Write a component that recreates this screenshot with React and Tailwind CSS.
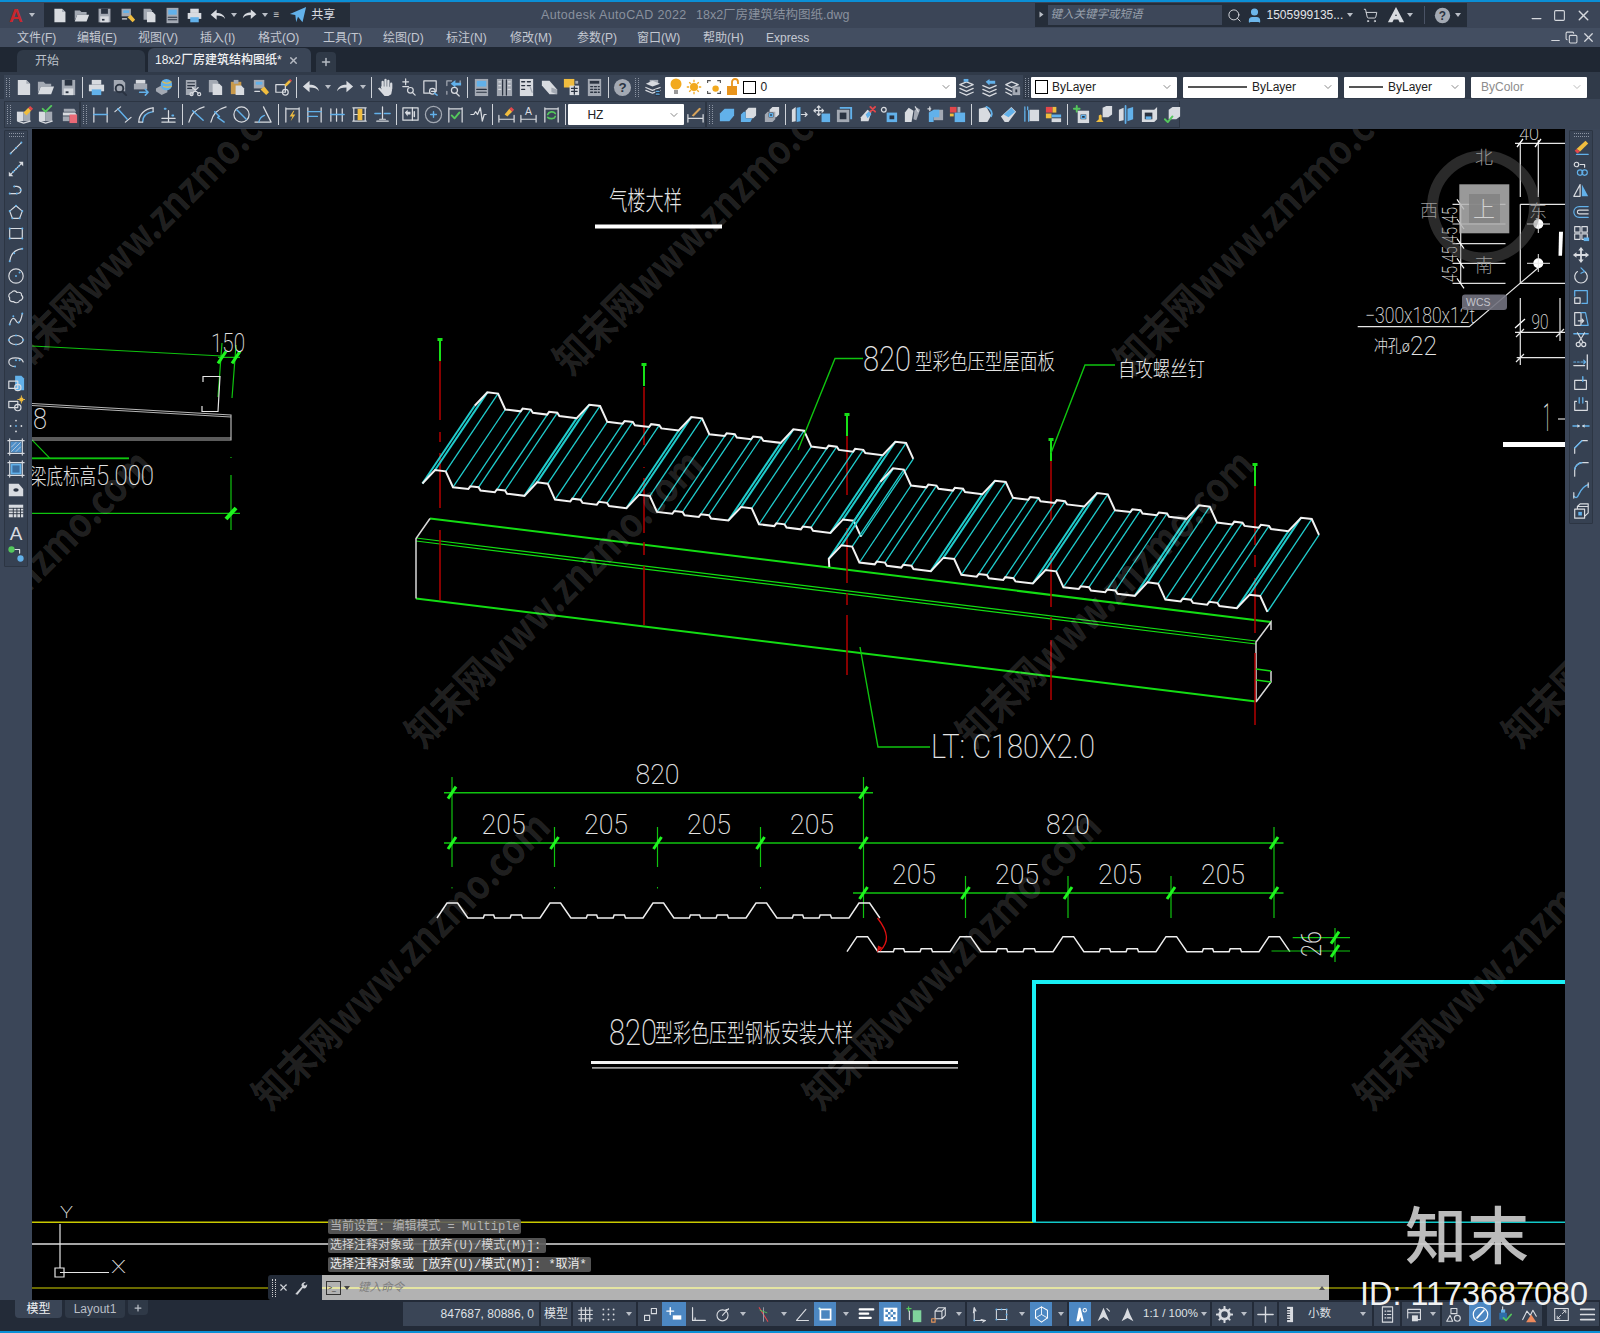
import React from 'react';
import { ChevronDown, Search, Plus, X, Minus, Square, Copy, ShoppingCart, User } from 'lucide-react';

const L = '#d8dbe0', M = '#a3a9b3', B = '#62b1ea', Y = '#f0bd3f', R = '#e2474b', N = '#54c75c', K = '#2a3341';
const ln = (d, c = L, w = 1.3) => <path d={d} stroke={c} strokeWidth={w} />;
const fl = (d, c = L) => <path d={d} fill={c} />;
const dot = (x, y, c = B, r = 1.1) => <circle cx={x} cy={y} r={r} fill={c} />;
const ring = (x, y, r, c = L, w = 1.3) => <circle cx={x} cy={y} r={r} stroke={c} strokeWidth={w} />;

const icons = {
  new: <>{fl('M4 2h9l4 4v12H4z')}{fl('M13 2l4 4h-4z', M)}</>,
  open: <>{fl('M2 4h6l2 2h6v3H5l-3 7z', M)}{fl('M5 9h14l-3 8H2z')}</>,
  save: <>{fl('M3 2h14v16H3z', M)}{fl('M6 2h8v6H6z', K)}{fl('M5 11h10v7H5z')}{fl('M7 14h3v2H7z', K)}</>,
  print: <>{fl('M5 2h10v5H5z')}{fl('M2 7h16v7H2z')}{fl('M5 12h10v6H5z', B)}</>,
  preview: <>{fl('M4 2h9l3 3v9H4z', M)}{ring(10, 11, 4, K, 2)}{ln('M13 14l4 4', K, 2)}</>,
  publish: <>{fl('M4 2h10v4H4z')}{fl('M2 6h14v6H2z', M)}{ln('M8 15h9m-3-3l3 3-3 3', B, 1.6)}</>,
  plot3d: <>{fl('M1 11l7-4 5 3v5l-6 3-6-4z', M)}<circle cx="12" cy="7" r="6" fill={B} />{ln('M8 4c3 2 6 2 9 0M9 9c3 1 5 1 8 0', Y, 1.2)}</>,
  cut: <>{fl('M3 2h11v9l-4 7H3z', M)}{ln('M5 5h7M5 8h7M5 11h4', K)}{ln('M10 10l6 6M16 10l-6 6', L, 1.2)}{ring(9, 17, 1.6)}{ring(17, 17, 1.6)}</>,
  copy: <>{fl('M3 2h8l2 2v11H3z', M)}{fl('M7 6h7l3 3v9H7z')}</>,
  paste: <>{fl('M3 4h11v13H3z', '#c9994a')}{fl('M6 2h5v4H6z', M)}{fl('M8 8h6l3 3v7H8z')}</>,
  match: <>{fl('M3 2h11v9H3z', M)}{fl('M5 4h7v3H5z', B)}{ln('M4 14h5', L)}{fl('M10 12l4-3 5 6-3 3z', Y)}</>,
  blockedit: <>{ln('M3 7h10v8H3z')}{ring(13, 15, 3)}{fl('M12 7l5-5 2 2-5 5z', Y)}{fl('M17 2l1-1 2 2-1 1z', R)}</>,
  undo: fl('M2 9l7-6v4c5 0 9 2 10 7-2-3-5-4-10-4v5z'),
  redo: fl('M18 9l-7-6v4C6 7 2 9 1 14c2-3 5-4 10-4v5z'),
  hand: <>{ln('M7 10V4M10 9V2M13 9V3M16 11V6', L, 2.4)}{fl('M5 9l9 0 3 3-1 5-3 2H9l-7-8 2-1 2 2z')}</>,
  zoomrt: <>{ln('M7 1v6M4 4h6M4 9h6')}{ring(12, 13, 3, L)}{ln('M14 15l3 3')}</>,
  zoomw: <>{ln('M3 3h13v11h-5M3 3v13h6')}{ring(12, 14, 3)}{ln('M14 16l3 2', B, 1.6)}</>,
  zoomp: <>{ln('M3 3h5M3 3v5M3 17v-3M17 3v3', M)}{fl('M7 6l5-4v3h6v3h-6v2z', B)}{ring(11, 13, 3.2)}{ln('M13 16l3 3')}</>,
  props: <>{fl('M3 1h14v18H3z', M)}{fl('M5 3h10v6H5z', B)}{ln('M5 12h10M5 15h10', K)}</>,
  sheet: <>{fl('M2 1h16v18H2z', M)}{ln('M8 2v16M12 2v16', K)}{ln('M4 4h2M4 8h2M4 12h2M14 4h2M14 8h2M14 12h2', L)}</>,
  toolp: <>{fl('M3 1h14v18H3z')}{ln('M5 4h3M11 4h3M5 8h3M11 8h3M5 12h3', K, 1.5)}{ln('M14 10l2 5', M)}</>,
  roll: <>{fl('M2 3h8l8 9v5H10L2 8z')}{fl('M12 10l6 2v5l-6-2z', M)}</>,
  markup: <>{fl('M2 1h11v9H2z', Y)}{fl('M8 8h10v10H8z')}{ln('M10 11h6M10 14h6M13 9v8', K)}{fl('M14 3h3v3h-3z', M)}</>,
  calc: <>{fl('M3 1h14v18H3z', M)}{fl('M5 3h10v3H5z', K)}{ln('M6 9h2M10 9h2M14 9h1M6 12h2M10 12h2M14 12h1M6 15h2M10 15h2M14 15h1', K, 1.4)}</>,
  help: <><circle cx="10" cy="10" r="9" fill={M} /><text x="10" y="15" textAnchor="middle" fontSize="14" fontWeight="700" fill={K} fontFamily="Liberation Sans">?</text></>,
  layers: <>{fl('M7 2h9v4H7z', M)}{fl('M3 6l7-3 8 3-8 3z', L)}{ln('M3 10l7 3 8-3M3 13l7 3 8-3', L)}{fl('M13 12h5v7h-5z', K)}{ln('M14 14h3M14 17h3', B)}</>,
  laymatch: <>{ln('M3 7l7 3 7-3-7-3zM3 11l7 3 7-3M3 15l7 3 7-3', L, 1.4)}{fl('M7 1h5v3H7z', B)}</>,
  laprev: <>{ln('M3 8l7 3 7-3M3 12l7 3 7-3M3 16l7 3 7-3', L, 1.4)}{fl('M6 4l4-3v2h6v3h-6v2z', B)}</>,
  laystate: <>{ln('M3 7l6 3 7-3-7-3zM3 11l6 3M3 15l6 3', L, 1.4)}{fl('M10 9h8v9h-8z', M)}{fl('M13 12h2v3h-2z', K)}</>,
  markedit: <>{fl('M2 7h7v10H2z')}{fl('M9 7h7v10H9z', M)}{ln('M3 17l6 2 7-2', L)}{fl('M9 8l5-5 3 3-5 5z', Y)}{fl('M14 3l2-2 3 3-2 2z', R)}</>,
  markok: <>{fl('M2 7h7v10H2z')}{fl('M9 7h7v10H9z', M)}{ln('M3 17l6 2 7-2', L)}{ln('M6 4l3 3 6-6', N, 2)}</>,
  markstack: <>{fl('M4 4h11l2 3H4z', M)}{fl('M3 8h13l2 3H3z')}{fl('M3 12h7v5H3z', M)}{fl('M10 10h8v9h-8z', '#e96a77')}</>,
  dlin: <>{ln('M3 3v15M17 3v15')}{ln('M3 10h14', B, 1.5)}</>,
  dali: <>{ln('M2 7l6-5M13 18l6-5')}{ln('M5 4l10 11', B, 1.5)}</>,
  darc: <>{ln('M3 18c0-8 6-14 15-15')}{ln('M7 18c0-6 4-10 11-11', B, 1.5)}{ln('M3 18h4M18 3v4')}</>,
  dord: <>{ln('M3 14h14M10 6v12M3 18h14')}{ln('M6 4h1M14 11h1', B, 2)}</>,
  drad: <>{ln('M2 18C4 9 10 4 18 2')}{ln('M6 6l11 10', B, 1.5)}</>,
  djog: <>{ln('M2 18C4 9 10 4 18 2')}{ln('M6 7l5 5 -2 1 7 5', B, 1.5)}</>,
  ddia: <>{ring(10, 10, 8)}{ln('M5 5l10 10', B, 1.5)}</>,
  dang: <>{ln('M1 18h17L10 2')}{ln('M5 18c1-4 3-6 6-7', B, 1.4)}</>,
  dqk: <>{ln('M3 3v15M17 3v15M3 4h14')}{fl('M11 6l-4 6h3l-2 5 5-7h-3l2-4z', Y)}</>,
  dbase: <>{ln('M3 3v15M17 3v15')}{ln('M3 7h14M3 12h10', B, 1.5)}</>,
  dcont: <>{ln('M3 4v13M9 4v13M15 4v13')}{ln('M3 10h14', B, 1.5)}</>,
  dspace: <>{ln('M3 3h14M3 17h14M4 10h12M4 3v14M16 3v14', L)}{fl('M8 4h5v12H8z', Y)}</>,
  dbreak: <>{ln('M10 2v13M4 17h12M7 15h6')}{ln('M2 9h6M12 9h6', B, 1.5)}</>,
  dtol: <>{ln('M2 3h16v13H2z')}{ln('M12 3v13')}{fl('M4 8l3-3v2h3v3H7v2z')}{ln('M14 7v5', L, 1.6)}</>,
  dcen: <>{ring(10, 10, 8.5, M)}{ln('M7 10h6M10 7v6', B, 1.5)}</>,
  dins: <>{ln('M3 3v15M17 3v15M3 4h14')}{ln('M6 11l3 3 5-6', N, 2)}</>,
  djl: ln('M2 10h3l2-3 2 3 3-7 2 14 2-7h2', L, 1.3),
  dedt: <>{ln('M2 11v7M18 11v7M2 15h16')}{fl('M8 10l5-6 3 3-5 5z', Y)}{fl('M13 4l2-2 3 3-2 2z', R)}</>,
  dtxt: <>{ln('M2 11v7M18 11v7M2 15h16')}<text x="10" y="11" textAnchor="middle" fontSize="11" fill={L} fontFamily="Liberation Sans">A</text></>,
  dupd: <>{ln('M3 3v15M17 3v15M3 4h14')}{ln('M6 10c1-3 6-4 8-1M14 12c-1 3-6 3-8 1', N, 1.7)}</>,
  dsty: <>{ln('M2 10v8M18 10v8M2 14h16')}{fl('M6 11l8-8 2 1-8 8z', '#d6a25a')}</>,
  union: <>{fl('M3 9l5-5h10v7l-5 6H3z', B)}</>,
  subtr: <>{fl('M7 6l3-3h8v8l-3 3H7z')}{fl('M2 10l3-3h2v7h7l-2 4H2z', B)}</>,
  inter: <>{fl('M8 5l3-3h7v8l-3 3H8z')}{fl('M3 10l3-3h8v8l-3 3H3z', M)}{fl('M7 8h5v5H7z', K)}{ln('M8 9h3v3H8z', B, 1.3)}</>,
  extr: <>{fl('M2 5l4-3v15l-4 1z')}{fl('M7 3l4-1v15l-4 1z', B)}{ln('M12 10h6m-2-2l2 2-2 2')}</>,
  move: <>{ln('M1 6h10M6 1v10M1 6l1.5-1.5M1 6l1.5 1.5M11 6L9.5 4.5M11 6L9.5 7.5M6 1L4.5 2.5M6 1l1.5 1.5M6 11l-1.5-1.5M6 11l1.500-1.500')}{fl('M9 9h9v9H9z', B)}</>,
  cpy3: <>{fl('M5 2h13v13h-2V4H5z', B)}{fl('M2 5h13v13H2z', M)}{fl('M5 8h7v7H5z', K)}</>,
  eras: <>{fl('M3 13l7-8 4 3-3 9H3z')}{fl('M8 10l4-4 2 4-4 4z', B)}{ln('M13 2l5 5M18 2l-5 5', R, 2)}</>,
  rot3: <>{ring(4, 5, 2.5)}{fl('M7 8h11v10H7z', B)}{fl('M10 11h5v4h-5z', K)}</>,
  scal3: <>{fl('M2 8l4-5 5 3-2 12H2z')}{fl('M12 6l3-3 3 2-4 11-3-1z', M)}{ln('M13 2l3 5')}</>,
  mirr3: <>{fl('M8 5h10v11H8z', M)}{fl('M3 8l5-3h6v8H8v5H3z', B)}{ln('M4 2v4m-2-2h3')}</>,
  arr3: <>{fl('M2 2h7v6H2z', R)}{fl('M10 2h3v6h-3z', M)}{fl('M2 9h4v3H2z', Y)}{fl('M7 8h11v10H7z', B)}</>,
  solid: <>{fl('M3 4l8-2 5 9-4 7H3z')}{ln('M11 2c5 2 7 7 5 10', B, 1.8)}</>,
  chamf: <>{fl('M2 12L13 2l5 5-8 11H6z')}{fl('M5 10l8-7 4 4-7 6z', B)}</>,
  exf: <>{ln('M3 2v3M6 2v3', B)}{ln('M3 6v11M7 6v11', B, 1.4)}{fl('M8 5h10v12H8z')}</>,
  sect: <>{fl('M2 2h7v6H2z', R)}{fl('M9 2h4v6H9z', Y)}{fl('M2 9h6v5H2z', Y)}{fl('M8 10h10v3H8z', B)}{fl('M8 14h10v4H8z')}</>,
  plusb: <>{ln('M2 4h6M5 1v6', N, 2)}{fl('M6 6h12v13H6z', L)}{fl('M9 10h6v5H9z', K)}{ln('M10 11h4v3h-4z', B)}</>,
  brush: <>{fl('M8 3l4-2h6v9l-4 3H8z')}{fl('M4 11l2-1 1 1v4l2 3H1l3-3z', Y)}</>,
  slice: <>{fl('M2 5l5-2v13l-5 1z')}{ln('M9 1v18', B, 1.8)}{fl('M11 4l6-2v13l-6 2z', B)}</>,
  shell: <>{fl('M2 5h13l3-3v13l-3 3H2z')}{fl('M5 8h8v7H5z', K)}{fl('M6 12h6v3H6z', B)}</>,
  chk3: <>{fl('M6 5l4-3h8v10l-4 3H6z')}{ln('M2 15l3 3 5-6', N, 2)}</>,
  line: <>{ln('M4 16L16 4')}{dot(4, 16)}{dot(16, 4)}{dot(10, 10)}</>,
  xline: <>{ln('M3 17L17 3', L, 1.3)}{fl('M13 2h5v5z')}{fl('M2 13v5h5z')}{dot(10, 10)}{dot(7, 13)}{dot(13, 7)}</>,
  pline: <>{ln('M3 14h8c6 0 6-7 0-8H8')}{dot(3, 14)}{dot(11, 14)}{dot(8, 6)}{dot(15, 10)}</>,
  poly: <>{ln('M10 3l7 6-3 8H6L3 9z')}{dot(10, 3)}{dot(17, 9)}{dot(14, 17)}{dot(6, 17)}{dot(3, 9)}</>,
  rect: <>{ln('M3 5h14v11H3z')}{dot(3, 5)}{dot(17, 5)}{dot(17, 16)}{dot(3, 16)}</>,
  arc: <>{ln('M3 17C4 9 9 4 17 3')}{dot(3, 17)}{dot(17, 3)}{dot(8, 8)}</>,
  circle: <>{ring(10, 10, 8)}{dot(10, 10)}{dot(14, 6)}</>,
  cloud: ln('M5 5c2-3 5-2 6 0 3-1 6 1 5 3 3 2 1 6-2 6-1 3-5 3-7 1-3 1-5-2-4-4-2-2-1-5 2-6z'),
  spline: <>{ln('M3 16c2-8 5-8 7-4s5 3 7-8')}{dot(3, 16)}{dot(7, 7)}{dot(13, 14)}{dot(17, 4)}</>,
  ellip: <>{<ellipse cx="10" cy="10" rx="8" ry="5" stroke={L} strokeWidth="1.3" />}{dot(2, 10)}{dot(18, 10)}{dot(10, 5)}{dot(10, 15)}</>,
  ellarc: <>{ln('M2 10c0-6 14-6 16 0M9 15c-4 0-7-2-7-5')}{dot(10, 8)}{dot(14, 8)}{dot(9, 15)}</>,
  ins: <>{fl('M9 2h7l3 3v13H9z', B)}{ln('M2 8h10v8H2z')}{ring(12, 15, 3.5)}</>,
  blk: <>{ln('M2 7h10v7H2z')}{ring(12, 14, 3.5)}{fl('M14 3h4v4h-4z', Y)}{ln('M16 1v8M12 5h8', Y, 1)}</>,
  point: <>{dot(10, 4, L, 1)}{dot(4, 10, L, 1)}{dot(16, 10, L, 1)}{dot(10, 16, L, 1)}{dot(10, 10, B, 1)}</>,
  hatch: <>{ln('M3 1v18M17 1v18M1 3h18M1 17h18')}{fl('M4 4h12v12H4z', '#4d8fc9')}{ln('M5 10l5-5M5 15l10-10M10 15l5-5', L, 0.8)}</>,
  grad: <>{ln('M3 1v18M17 1v18M1 3h18M1 17h18')}{fl('M4 4h12v12H4z', B)}{fl('M6 6h8v8H6z', '#3a6ea0')}</>,
  region: <>{fl('M2 3h11l5 6v8H2z')}<ellipse cx="10" cy="10" rx="3" ry="2" fill={K} /></>,
  table: <>{fl('M2 3h16v14H2z')}{ln('M2 7h16M2 10h16M2 13h16M7 7v10M11 7v10M15 7v10', K, 1)}</>,
  mtext: <text x="10" y="18" textAnchor="middle" fontSize="21" fill={L} fontFamily="Liberation Sans">A</text>,
  addsel: <><circle cx="5" cy="5" r="3.500" fill={N} /><circle cx="15" cy="15" r="3.500" fill={B} />{ln('M9 5h5v4')}</>,
  erase: <>{fl('M5 11L15 2l3 3-9 9z', Y)}{fl('M3 13l2-2 4 3-3 2z', R)}{ln('M5 17h13', B, 1.5)}</>,
  cobj: <>{ring(5, 5, 2.5)}{ln('M9 5h5v3', L)}{ring(9, 14, 3, B)}{ring(14, 14, 3, B)}</>,
  mirror: <>{ln('M9 17H2L9 4z')}{fl('M11 4v13h7z', B)}</>,
  offset: <>{ln('M18 4H8a6 6 0 000 12h10', B)}{ln('M18 8H8a2 2 0 000 4h10')}</>,
  array: <>{ln('M3 3h6v6H3zM11 3h6v6h-6zM3 11h6v6H3zM11 11h6v6h-6z')}{fl('M13 15h6v4h-6z', B)}</>,
  movec: <>{fl('M10 1l3 4h-2v4h4V7l4 3-4 3v-2h-4v4h2l-3 4-3-4h2v-4H5v2l-4-3 4-3v2h4V5H7z')}</>,
  rotate: <>{ln('M6 5a7 7 0 108 0')}{ln('M10 1l4 4-4 2', B, 1.3)}</>,
  scale: <>{ln('M3 11h6v6H3z')}{ln('M3 9V3h14v14h-6', B, 1.4)}</>,
  stretch: <>{ln('M3 3h7v14H3z')}{ln('M10 3h5l3 14h-8', B)}{ln('M7 12h6m-2-2l2 2-2 2')}</>,
  trim: <>{ln('M2 3h16', B, 1.5)}{ln('M6 2l6 10M14 2L8 12')}{ring(7, 15, 2.3)}{ring(13, 15, 2.3)}</>,
  extend: <>{ln('M17 2v16', L, 1.4)}{ln('M2 10h2M6 10h2M10 10h5m-2-2l2 2-2 2', B)}{ln('M2 14h12', L)}</>,
  brkp: <>{ln('M3 7h13v10H3z')}{ln('M12 3v5', B, 1.6)}</>,
  brk: <>{ln('M3 7v10h14V7M3 7h2M15 7h2')}{ln('M8 3v6M12 3v6', B, 1.4)}</>,
  join: <>{ln('M1 10h7M12 10h7', B, 1.4)}{fl('M6 8l3 2-3 2zM14 8l-3 2 3 2z')}</>,
  chamfer: <>{ln('M3 17v-6l8-8h6')}{ln('M3 11l8-8', B, 1.5)}</>,
  fillet: <>{ln('M3 18v-7c0-4 4-8 8-8h7')}{ln('M3 10c1-4 4-6 8-7', B, 1.5)}</>,
  blend: <>{ln('M2 17c3 3 4 1 6-3s4-8 10-10', B, 1.5)}{ln('M2 13v6M18 2v5')}</>,
  explode: <>{ln('M3 8h11v10H3zM6 8V5l3-3h9v10l-4 4M6 5h11')}{fl('M7 11h4v4H7z', B)}</>,
  rowgrid: ln('M5 2v16M10 2v16M15 2v16M2 5h16M2 10h16M2 15h16', L, 1.4),
  rowsnap: <>{[4, 10, 16].map((y) => [4, 10, 16].map((x) => <circle key={x + '-' + y} cx={x} cy={y} r="1.100" fill={L} />))}</>,
  snapq: <>{ln('M11 3h6v6h-6z')}{ln('M3 17v-6h6v6z')}</>,
  dynin: <>{ln('M5 2v8M1 6h8', '#fff', 1.6)}{fl('M8 11h10v5H8z', '#fff')}</>,
  ortho: ln('M3 2v15h15M6 17v-3', L, 1.4),
  polar: <>{ring(10, 11, 6.500)}{ln('M10 11l7-8M14 7v-3h3', L, 1.2)}</>,
  osnap: <>{ln('M5 2l10 16', R, 1.3)}{ln('M10 2v16', M, 1)}{ln('M6 5l8 3', N, 1)}</>,
  angle: ln('M3 17h14M3 17L14 4', L, 1.3),
  lockv: <>{fl('M3 3h14v14H3z', '#fff')}{fl('M5 5h10v10H5z', '#4b86bf')}{dot(3, 3, '#cfe', 1.3)}</>,
  lw: ln('M2 4h16M2 9h10M2 14h13', '#fff', 2.6),
  trans: <><rect x="2" y="2" width="16" height="16" fill="#fff" /><path d="M4 4h3v3H4zM10 4h3v3h-3zM7 7h3v3H7zM13 7h3v3h-3zM4 10h3v3H4zM10 10h3v3h-3zM7 13h3v3H7zM13 13h3v3h-3z" fill="#4b86bf" /></>,
  selcyc: <>{ln('M3 1v5M6 3H1', N, 1.4)}{ln('M4 6v10', L, 1.3)}{fl('M8 5h10v14H8z', '#7fd39c')}</>,
  obj3: <>{ln('M6 6l4-4h8v9l-4 4H6zM6 6h8v9M14 6l4-4')}{ln('M2 15h4v4H2z', '#e7955a')}</>,
  ucsd: <>{ln('M5 2v15h13', L)}{ln('M4 8l1-6 2 4M13 16l5 1-3 2', L)}{dot(5, 17, B)}</>,
  gizmo: <>{ln('M4 4h12v12H4z', L, 1.2)}{dot(4, 4)}{dot(16, 4)}{dot(16, 16)}{dot(4, 16)}{dot(10, 4)}{dot(16, 10)}</>,
  annoauto: <>{ln('M10 1l7 4v9l-7 5-7-5V5z', '#fff', 1.2)}{ln('M10 1v9l7 4M10 10l-7 4', '#fff', 1)}</>,
  annoact: <>{fl('M8 2l2 0 4 16h-3l-1-5-2 5H5z', '#fff')}{ring(15, 5, 2, '#fff', 1.2)}</>,
  annob: <>{fl('M10 2l3 7 4 9-7-5-7 5 4-9z', L)}{ln('M14 3l3 3', L)}</>,
  annoc: fl('M10 2l3 8 4 8-7-4-7 4 4-8z', L),
  gear: <><circle cx="10" cy="10" r="5.500" stroke={L} strokeWidth="3.400" /><path d="M10 1v3M10 16v3M1 10h3M16 10h3M4 4l2 2M14 14l2 2M16 4l-2 2M4 16l2-2" stroke={L} strokeWidth="2.400" /></>,
  plus: ln('M10 1v18M1 10h18', L, 1.6),
  ruler: <>{fl('M6 1h7v18H6z')}{ln('M6 4h3M6 7h3M6 10h3M6 13h3M6 16h3', K, 1.2)}</>,
  quickp: <>{ln('M4 1h12v18H4z')}{ln('M7 6h1M10 6h4M7 10h1M10 10h4M7 14h1M10 14h4', L, 1.3)}</>,
  lockui: <>{ln('M2 4h15v12H9M2 4v10M2 8h15')}{fl('M7 11h7v7H7z')}</>,
  isolate: <>{ln('M7 3h7v6H7z')}{ln('M6 11l-4 7h7z')}{ring(14.500, 14.500, 3.500)}</>,
  hwacc: <><circle cx="10" cy="10" r="8.500" stroke="#fff" strokeWidth="1.400" />{ln('M6 14L14 5', '#fff', 2)}</>,
  clean: <>{fl('M7 4h5v4H7z', B)}{fl('M5 8h9v8H5z', '#2d6da8')}{ln('M9 1v3', L)}{ln('M10 14l3 3 6-7', N, 2)}</>,
  warn: <>{ln('M2 16l5-10 4 5 3-6 4 7', L, 1.3)}{fl('M12 10l6 9H6z', '#ee8a5c')}</>,
  full: <>{ln('M2 3h16v14H2z', L, 1.2)}{ln('M6 14l3-3M14 6l-3 3M5 12v3h3M15 8V5h-3', L, 1.1)}</>,
  menu: ln('M2 4h16M2 10h16M2 16h16', L, 2),
  alogo: fl('M10 1l9 17h-5l-1.500-3H7.500L6 18H1zM9 11h2l-1-2z', L),
};

const Ic = ({ n, s = 20, className = '' }) => (
  <svg className={className} width={s} height={s} viewBox="0 0 20 20" fill="none" strokeLinecap="round" strokeLinejoin="round">
    {icons[n]}
  </svg>
);

const Tb = ({ n, s = 19 }) => (
  <div className="flex h-full w-[22.6px] shrink-0 items-center justify-center">
    <Ic n={n} s={s} />
  </div>
);
const Sep = () => (
  <div className="flex h-full w-[5.5px] shrink-0 items-center justify-center">
    <div className="h-[21px] w-px bg-[#cfd3d9]" />
  </div>
);
const Grip = () => (
  <div className="mx-[2px] h-[19px] w-[4px] shrink-0 border-x border-dotted border-[#8d95a3]" />
);
const Caret = ({ className = 'w-[12px]' }) => (
  <div className={`flex h-full shrink-0 items-center justify-center ${className}`}>
    <div className="border-x-[3px] border-t-[4px] border-x-transparent border-t-[#b9bec6]" />
  </div>
);

const Combo = ({ className, children, light }) => (
  <div className={`flex h-[21px] shrink-0 items-center justify-between rounded-[1px] bg-white text-[12px] text-[#222] ${className}`}>
    <div className="flex min-w-0 items-center">{children}</div>
    <ChevronDown size={12} className={light ? 'mr-1 text-[#bbb]' : 'mr-1 text-[#888]'} />
  </div>
);

const menus = [
  ['文件(F)', 'w-[60px]'], ['编辑(E)', 'w-[61px]'], ['视图(V)', 'w-[62px]'], ['插入(I)', 'w-[58px]'], ['格式(O)', 'w-[65px]'], ['工具(T)', 'w-[60px]'],
  ['绘图(D)', 'w-[63px]'], ['标注(N)', 'w-[64px]'], ['修改(M)', 'w-[67px]'], ['参数(P)', 'w-[60px]'], ['窗口(W)', 'w-[66px]'], ['帮助(H)', 'w-[63px]'],
];

function TitleBar() {
  return (
    <div className="flex h-[26px] shrink-0 items-center bg-[#3b4557]">
      <div className="flex w-[44px] items-center pl-[9px]">
        <span className="font-['Liberation_Sans'] text-[19px] leading-none font-bold text-[#c8272c]">A</span>
        <Caret className="ml-[5px] w-[8px]" />
      </div>
      <div className="flex h-[24px] w-[306px] items-center bg-[#252d39] pl-[4px]">
        <Tb n="new" s={17} /><Tb n="open" s={17} /><Tb n="save" s={17} /><Tb n="match" s={17} /><Tb n="copy" s={17} /><Tb n="props" s={17} /><Tb n="print" s={17} /><Tb n="undo" s={17} />
        <Caret className="w-[10px]" /><Tb n="redo" s={16} /><Caret className="w-[8px]" />
        <div className="w-[14px] text-center text-[10px] leading-none text-[#ccc]">≡</div>
        <svg width="18" height="18" viewBox="0 0 20 20" className="ml-[6px]"><path d="M1 9L19 1l-4 17-5-6-2 6-1-8z" fill={B} /></svg>
        <span className="ml-[4px] text-[12px] text-[#d8dbe0]">共享</span>
      </div>
      <div className="ml-[191px] flex items-center text-[12.500px] text-[#8a919e]">
        <span className="w-[155px] font-['Liberation_Sans'] tracking-[0.35px]">Autodesk AutoCAD 2022</span>
        <span>18x2厂房建筑结构图纸.dwg</span>
      </div>
      <div className="ml-[185px] flex h-[24px] w-[432px] items-center bg-[#252d39]">
        <Caret className="w-[13px] rotate-[-90deg]" />
        <div className="flex h-[20px] w-[174px] items-center bg-[#3d4759] pl-[3px] text-[11.500px] text-[#98a0ac] italic">键入关键字或短语</div>
        <Search size={15} strokeWidth={1.5} className="ml-[5px] text-[#d8dbe0]" />
        <User size={17} className="ml-[4px] fill-[#6db6ea] text-[#6db6ea]" />
        <span className="ml-[4px] font-['Liberation_Sans'] text-[12px] text-[#e2e4e8]">1505999135...</span>
        <Caret className="ml-[2px] w-[10px]" />
        <ShoppingCart size={15} strokeWidth={1.6} className="ml-[8px] text-[#d0d3d8]" />
        <Ic n="alogo" s={18} className="ml-[9px]" />
        <Caret className="w-[10px]" />
        <div className="ml-[9px] h-[18px] w-px bg-[#4a5365]" />
        <Ic n="help" s={17} className="ml-[9px]" />
        <Caret className="ml-[2px] w-[10px]" />
      </div>
      <div className="ml-auto flex items-center gap-[9px] pr-[8px] text-[#d5d8dd]">
        <Minus size={15} className="translate-y-[3px]" />
        <Square size={13} />
        <X size={17} />
      </div>
    </div>
  );
}

function MenuBar() {
  return (
    <div className="flex h-[19px] shrink-0 items-center bg-[#434e61] pl-[17px] text-[12px] text-[#c3c8d1]">
      <div className="flex">
        {menus.map(([m, w]) => <span key={m} className={`${w} whitespace-nowrap`}>{m}</span>)}
        <span className="font-['Liberation_Sans']">Express</span>
      </div>
      <div className="ml-auto flex items-center gap-[3px] pr-[4px] text-[#d5d8dd]">
        <Minus size={13} className="translate-y-[3px]" />
        <Copy size={13} />
        <X size={15} />
      </div>
    </div>
  );
}

function TabStrip() {
  return (
    <div className="flex h-[25px] shrink-0 items-end bg-[#1f2733] pl-[17px] text-[12px]">
      <div className="flex h-[22px] w-[128px] items-center rounded-t-[6px] bg-[#2f3947] pl-[18px] text-[#bcc1ca]">开始</div>
      <div className="ml-[3px] flex h-[24px] w-[163px] items-center rounded-t-[6px] bg-[#3a4556] pl-[7px] font-medium text-[#f0f1f3]">
        <span className="whitespace-nowrap">18x2厂房建筑结构图纸*</span>
        <X size={11} strokeWidth={3} className="ml-[6px] text-[#b5bac2]" />
      </div>
      <div className="ml-[5px] flex h-[20px] w-[20px] items-center justify-center rounded-t-[4px] bg-[#2f3947]">
        <Plus size={12} strokeWidth={3} className="text-[#b5bac2]" />
      </div>
    </div>
  );
}

function ToolRow1() {
  return (
    <div className="flex h-[27px] shrink-0 items-center bg-[#303a49] pt-[3px] pl-[4px]">
      <div className="flex h-[24px] w-[629px] items-center bg-[#3a4556]">
        <Grip />
        <Tb n="new" /><Tb n="open" /><Tb n="save" /><Sep />
        <Tb n="print" /><Tb n="preview" /><Tb n="publish" /><Tb n="plot3d" /><Sep />
        <Tb n="cut" /><Tb n="copy" /><Tb n="paste" /><Tb n="match" /><Tb n="blockedit" /><Sep />
        <Tb n="undo" /><Caret /><Tb n="redo" /><Caret /><Sep />
        <Tb n="hand" /><Tb n="zoomrt" /><Tb n="zoomw" /><Tb n="zoomp" /><Sep />
        <Tb n="props" /><Tb n="sheet" /><Tb n="toolp" /><Tb n="roll" /><Tb n="markup" /><Tb n="calc" /><Sep />
        <Tb n="help" />
      </div>
      <div className="flex h-[24px] w-[390px] items-center bg-[#3a4556]">
        <Grip />
        <Tb n="layers" />
        <Combo className="ml-[1px] w-[291px]">
          <svg width="14" height="18" viewBox="0 0 14 18" className="ml-[4px]"><circle cx="7" cy="6" r="5.500" fill="#f2a91e" /><path d="M5 12h4v4H5z" fill="#999" /></svg>
          <svg width="16" height="16" viewBox="0 0 20 20" className="ml-[3px]"><circle cx="10" cy="10" r="5" fill="#f2a91e" /><path d="M10 1v3M10 16v3M1 10h3M16 10h3M4 4l2 2M14 14l2 2M16 4l-2 2M4 16l2-2" stroke="#f2a91e" strokeWidth="1.600" /></svg>
          <svg width="16" height="18" viewBox="0 0 20 20" className="ml-[4px]"><path d="M2 5V2h4M14 2h4v3M2 15v3h4M18 15v3h-4" stroke="#555" strokeWidth="1.400" fill="none" /><circle cx="12" cy="12" r="4" fill="#f2a91e" /></svg>
          <svg width="14" height="18" viewBox="0 0 14 18" className="ml-[4px]"><path d="M6 8V4a3 3 0 016 0v2" stroke="#e8941c" strokeWidth="1.800" fill="none" /><path d="M1 8h10v9H1z" fill="#e8941c" /></svg>
          <div className="ml-[3px] h-[13px] w-[13px] border border-black bg-white" />
          <span className="ml-[5px] font-['Liberation_Sans']">0</span>
        </Combo>
        <Tb n="laymatch" /><Tb n="laprev" /><Tb n="laystate" />
      </div>
      <Grip />
      <Combo className="w-[146px]">
        <div className="ml-[4px] h-[14px] w-[13px] border border-black bg-white" />
        <span className="ml-[4px] font-['Liberation_Sans']">ByLayer</span>
      </Combo>
      <div className="ml-[6px]" />
      <Combo className="w-[155px]">
        <div className="ml-[5px] h-[2px] w-[59px] bg-[#555]" />
        <span className="ml-[5px] font-['Liberation_Sans']">ByLayer</span>
      </Combo>
      <div className="ml-[6px]" />
      <Combo className="w-[121px]">
        <div className="ml-[5px] h-[2px] w-[34px] bg-[#555]" />
        <span className="ml-[5px] font-['Liberation_Sans']">ByLayer</span>
      </Combo>
      <div className="ml-[6px]" />
      <Combo light className="w-[116px] bg-[#f2f2f2]">
        <span className="ml-[10px] font-['Liberation_Sans'] text-[#8c8c8c]">ByColor</span>
      </Combo>
    </div>
  );
}

function ToolRow2() {
  return (
    <div className="flex h-[30px] shrink-0 items-start bg-[#3a4556] pt-[2px] pl-[4px]">
      <div className="flex h-[27px] w-[76px] items-center border border-[#2c3543]">
        <Grip />
        <Tb n="markedit" /><Tb n="markok" /><Tb n="markstack" />
      </div>
      <div className="flex h-[27px] w-[626px] items-center border border-[#2c3543]">
        <Grip />
        <Tb n="dlin" /><Tb n="dali" /><Tb n="darc" /><Tb n="dord" /><Sep />
        <Tb n="drad" /><Tb n="djog" /><Tb n="ddia" /><Tb n="dang" /><Sep />
        <Tb n="dqk" /><Tb n="dbase" /><Tb n="dcont" /><Tb n="dspace" /><Tb n="dbreak" /><Sep />
        <Tb n="dtol" /><Tb n="dcen" /><Tb n="dins" /><Tb n="djl" /><Sep />
        <Tb n="dedt" /><Tb n="dtxt" /><Tb n="dupd" /><Sep />
        <Combo className="w-[116px]"><span className="ml-[19px] font-['Liberation_Sans']">HZ</span></Combo>
        <Tb n="dsty" />
      </div>
      <div className="flex h-[27px] w-[474px] items-center border border-[#2c3543]">
        <Grip />
        <Tb n="union" /><Tb n="subtr" /><Tb n="inter" /><Sep />
        <Tb n="extr" /><Tb n="move" /><Tb n="cpy3" /><Tb n="eras" /><Tb n="rot3" /><Tb n="scal3" /><Tb n="mirr3" /><Tb n="arr3" /><Sep />
        <Tb n="solid" /><Tb n="chamf" /><Tb n="exf" /><Tb n="sect" /><Sep />
        <Tb n="plusb" /><Tb n="brush" /><Tb n="slice" /><Tb n="shell" /><Tb n="chk3" />
      </div>
    </div>
  );
}

const leftTools = ['line', 'xline', 'pline', 'poly', 'rect', 'arc', 'circle', 'cloud', 'spline', 'ellip', 'ellarc', 'ins', 'blk', 'point', 'hatch', 'grad', 'region', 'table', 'mtext', 'addsel'];
const rightTools = ['erase', 'cobj', 'mirror', 'offset', 'array', 'movec', 'rotate', 'scale', 'stretch', 'trim', 'extend', 'brkp', 'brk', 'join', 'chamfer', 'fillet', 'blend', 'explode'];

const SideBar = ({ tools, className }) => (
  <div className={`flex h-full shrink-0 flex-col bg-[#3b4658] pt-px ${className}`}>
    <div className="w-[24px] rounded-[1px] border border-[#2c3543] bg-[#364152]">
      <div className="mx-auto mt-[2px] h-[4px] w-[15px] border-y border-dotted border-[#8d95a3]" />
      <div className="flex flex-col items-center pb-[1px]">
        {tools.map((t) => (
          <div key={t} className="flex h-[21.400px] w-full items-center justify-center"><Ic n={t} s={18} /></div>
        ))}
      </div>
    </div>
  </div>
);

// roof sheet profile, one rib per period
const PX = 102, PY = 12.35;
const ribShape = [[0, 0], [0.124, 15], [0.229, 15], [0.3, 0], [0.45, 0], [0.47, 3], [0.55, 3], [0.57, 0], [0.71, 0], [0.73, 3], [0.81, 3], [0.83, 0], [1, 0]];
// which vertices of a rib get a line across the sheet; the first two are heavier
const hatchAt = [2, 2, 1.3, 1.3, 0, 1.3, 1.3, 0, 0, 1.3, 1.3, 0, 0];
const sheetPts = (x0, y0, ribs) => {
  const pts = [];
  for (let r = 0; r < ribs; r++) ribShape.forEach(([f, h]) => pts.push([x0 + (r + f) * PX, y0 + (r + f) * PY - h]));
  ribShape.slice(0, 4).forEach(([f, h]) => pts.push([x0 + (ribs + f) * PX, y0 + (ribs + f) * PY - h]));
  return pts;
};
const poly = (pts) => pts.map((p) => p.join(',')).join(' ');

function RoofSheet({ x0, y0, ribs, dx, dy, tail }) {
  const back = sheetPts(x0, y0, ribs);
  const front = back.map(([x, y]) => [x + dx, y + dy]);
  return (
    <g>
      {back.map(([x, y], i) => {
        const w = hatchAt[i % 13];
        if (!w) return null;
        return <line key={i} x1={x} y1={y} x2={front[i][0]} y2={front[i][1]} stroke="#20cccc" strokeWidth={w} />;
      })}
      <polyline points={poly(back)} fill="none" stroke="#f2f2f2" strokeWidth="2" />
      <polyline points={poly(tail ? [tail, ...front] : front)} fill="none" stroke="#f2f2f2" strokeWidth="2" />
    </g>
  );
}

function FlatProfile({ x0, y, ribs }) {
  const pts = [];
  const shape = [[0, 0], [0.097, 15], [0.2, 15], [0.3, 0], [0.45, 0], [0.46, 3], [0.55, 3], [0.56, 0], [0.71, 0], [0.72, 3], [0.82, 3], [0.83, 0], [1, 0]];
  for (let r = 0; r < ribs; r++) shape.forEach(([f, h]) => pts.push([x0 + (r + f) * 103, y - h]));
  shape.slice(0, 4).forEach(([f, h]) => pts.push([x0 + (ribs + f) * 103, y - h]));
  return <polyline points={poly(pts)} fill="none" stroke="#eee" strokeWidth="1.500" />;
}

const Tick = ({ x, y, c = '#1ff51f' }) => <line x1={x - 4} y1={y + 6} x2={x + 4} y2={y - 6} stroke={c} strokeWidth="3" />;
const G = ({ d, w = 1.2, c = '#0fc40f' }) => <path d={d} fill="none" stroke={c} strokeWidth={w} />;
const W = ({ d, w = 1.2, c = '#e6e6e6' }) => <path d={d} fill="none" stroke={c} strokeWidth={w} />;

const CAD_LATIN = { fontFamily: 'Roboto, "Liberation Sans", sans-serif', fontWeight: 200 };
const CAD_CJK = { fontFamily: '"Noto Sans CJK SC", sans-serif', fontWeight: 300 };
const T = ({ x, y, w, size, cjk, anchor = 'start', rot, c = '#e4e4e4', children }) => (
  <text
    x={x}
    y={y}
    fontSize={size}
    fill={c}
    textAnchor={anchor}
    textLength={w}
    lengthAdjust="spacingAndGlyphs"
    transform={rot ? `rotate(${rot} ${x} ${y})` : undefined}
    style={cjk ? CAD_CJK : CAD_LATIN}
  >
    {children}
  </text>
);

const redSegs = [
  [440, [[361, 420], [432, 442], [453, 508], [530, 600]]],
  [644, [[387, 445], [467, 468], [478, 533], [542, 555], [566, 625]]],
  [847, [[435, 495], [528, 583], [593, 605], [615, 675]]],
  [1051, [[460, 520], [553, 607], [617, 630], [640, 700]]],
  [1255, [[485, 545], [555, 567], [578, 633], [653, 725]]],
];

const Screw = ({ x, y }) => (
  <g>
    <path d={`M${x - 2.5} ${y}h5v3h-1.500v3h-2v-3h-1.500z`} fill="#18e018" />
    <line x1={x} y1={y + 4} x2={x} y2={y + 23} stroke="#18e018" strokeWidth="2" />
  </g>
);

const wmRows = [
  [20, 377], [571, 377], [1132, 377],
  [-128, 750], [423, 750], [974, 750], [1520, 750],
  [270, 1112], [821, 1112], [1372, 1112],
];

function Drawing() {
  return (
    <svg viewBox="32 129 1533 1171" className="block h-full w-full bg-black">
      {/* long background lines */}
      <path d="M32 1222.300H1033" stroke="#c9c900" strokeWidth="1.500" />
      <path d="M1033 1222.300H1565" stroke="#12c8c8" strokeWidth="1.500" />
      <path d="M32 1244H1565" stroke="#dcdcdc" strokeWidth="1.500" />
      <path d="M32 1288H1565" stroke="#8e8e00" strokeWidth="1.500" />
      <path d="M1566 982H1034V1222" fill="none" stroke="#19f0f5" strokeWidth="4" />

      {/* ucs */}
      <W d="M60 1224V1268M55 1268h9v9h-9zM60 1272.500H109" />
      <T x={60} y={1218} w={13} size={17} c="#ddd">Y</T>
      <T x={111} y={1273} w={15} size={18} c="#ddd">X</T>

      {/* title */}
      <T x={609} y={210} w={73} size={26} cjk>气楼大样</T>
      <path d="M595 226.500H722" stroke="#fff" strokeWidth="4" />

      {/* purlin */}
      <path d="M430 518.500L1271 622M416 598.500L1256 701.500" fill="none" stroke="#13dd13" strokeWidth="2" />
      <path d="M416 538L1256 641M416 541L1256 644" fill="none" stroke="#13dd13" strokeWidth="1.200" />
      <W d="M416 598.500V538.500L430 518.500M1256 702V642L1271 622V630M1256 702L1271 682V671" w={1.500} c="#d8d8d8" />
      <G d="M1256 669L1271 671M1256 680L1271 682" w={1.500} c="#13dd13" />

      {/* screws and dashed lines */}
      {redSegs.map(([x, segs]) => (
        <g key={x}>
          {segs.map(([a, b]) => <line key={a} x1={x} y1={a} x2={x} y2={b} stroke="#b50000" strokeWidth="1.500" />)}
        </g>
      ))}
      <Screw x={440} y={338} /><Screw x={644} y={363} /><Screw x={847} y={413} /><Screw x={1051} y={438} /><Screw x={1255} y={463} />

      <RoofSheet x0={474.700} y0={405.800} ribs={4} dx={-52.300} dy={77.700} />
      <RoofSheet x0={880.400} y0={481.800} ribs={4} dx={-51.600} dy={77} tail={[829.300, 567]} />

      {/* leaders */}
      <G d="M798 450L835 358.500H863" w={1.400} />
      <G d="M1051 453L1085 365H1115" w={1.400} />
      <G d="M860 647L878 747H930" w={1.400} />
      <T x={863} y={371} w={48} size={35}>820</T>
      <T x={915} y={369} w={140} size={22} cjk>型彩色压型屋面板</T>
      <T x={1118} y={376} w={87} size={21} cjk>自攻螺丝钉</T>
      <T x={931} y={758} w={164} size={33}>LT: C180X2.0</T>

      {/* dimensions */}
      <G d="M444 792.700H873M444 843H1283.500M853 893H1283.500" w={1.400} />
      <G d="M452 777V867M554.500 827V867M657.500 827V867M760.500 827V867M863.500 777V918M965.500 876V918M1068 876V918M1171 876V918M1274 827V918" w={1.200} />
      {[452, 554.500, 657.500, 760.500, 863.500, 1274].map((x) => <Tick key={x} x={x} y={843} />)}
      {[452, 863.500].map((x) => <Tick key={x} x={x} y={792.700} />)}
      {[863.500, 965.500, 1068, 1171, 1274].map((x) => <Tick key={x} x={x} y={893} />)}
      {[452, 554.500, 657.500, 760.500].map((x) => <path key={x} d={`M${x} 887v1.500`} stroke="#0fc40f" strokeWidth="1" />)}
      <T x={657.500} y={784} w={44} size={28} anchor="middle">820</T>
      <T x={1068} y={834} w={44} size={28} anchor="middle">820</T>
      {[503.600, 606, 709, 812].map((x) => <T key={x} x={x} y={834} w={44} size={28} anchor="middle">205</T>)}
      {[914, 1017, 1120, 1223].map((x) => <T key={x} x={x} y={884} w={44} size={28} anchor="middle">205</T>)}

      <FlatProfile x0={437} y={918} ribs={4} />
      <FlatProfile x0={847} y={951.700} ribs={4} />
      <path d="M877.500 918C889 933 889 942 880 951" fill="none" stroke="#e01010" strokeWidth="1.300" />
      <path d="M877 952.500l1-7 4 2z" fill="#e01010" />
      <G d="M1292.700 937.700H1350M1271.500 951H1350M1335 928V962" />
      <Tick x={1335} y={937.700} /><Tick x={1335} y={951} />
      <T x={1321} y={944} w={26} size={28} anchor="middle" rot={-90}>26</T>

      <T x={609} y={1045} w={48} size={36}>820</T>
      <T x={655} y={1042} w={198} size={25} cjk>型彩色压型钢板安装大样</T>
      <path d="M591 1062.500H958" stroke="#f2f2f2" strokeWidth="3" />
      <path d="M592 1067.800H958" stroke="#9c9c9c" strokeWidth="1.800" />

      {/* left detail */}
      <G d="M32 346L222 356M222 343L218 397M236 345L232 398M218 357.300H240M32 440L50 458.300M32 458.300H129M32 513.300H240M231 457V458M231 475V530" />
      <G d="M32 458.300H129" w={1.800} />
      <Tick x={222} y={357.300} /><Tick x={236} y={357.300} />
      <path d="M226 519l10-11" stroke="#1ff51f" strokeWidth="4" />
      <W d="M203 382V376.500H220L218 411.500H202V406" />
      <W d="M32 403.500L231 415V440H32M32 405.500L231 417M32 438H231" c="#b5b5b5" />
      <T x={228} y={352} w={34} size={25} anchor="middle">150</T>
      <T x={33} y={429} w={14} size={29}>8</T>
      <T x={30} y={484} w={66} size={22} cjk>梁底标高</T>
      <T x={96} y={485} w={58} size={28}>5.000</T>

      {/* right detail */}
      <W d="M1452.500 204.300H1505.500M1452.500 224H1505.500M1452.500 243.700H1505.500M1452.500 263.300H1505.500M1452.500 283.300H1505.500M1460.700 204V283" c="#dcdcdc" />
      {[204.300, 224, 243.700, 263.300, 283.300].map((y) => <path key={y} d={`M1457 ${y - 5}l7 10`} stroke="#fff" strokeWidth="1.200" />)}
      <W d="M1520.300 143V197M1538.300 140V197M1515 143.300H1565M1520.300 204.300H1565M1520.300 204.300V283.300H1565" />
      <W d="M1517 147l6-8M1535 147l6-8M1515 328l10-9" w={1.300} c="#fff" />
      <circle cx="1538.300" cy="224" r="5" fill="#fff" />
      <circle cx="1538.300" cy="263.300" r="5" fill="#fff" />
      <W d="M1527 224h23M1538.300 215v18M1527 263.300h23M1538.300 254v18" w={1} />
      <W d="M1538 268L1469.300 326.700H1357.700" />
      <path d="M1559 231.700h4l-1 24h-3.500z" fill="#fff" />
      <W d="M1520.300 298V365M1560 298V341M1515 332.300H1565M1516.700 357.700H1565M1516 337l8-8M1556 337l8-8M1516 362l8-8" />
      <T x={1529} y={140} w={20} size={19} anchor="middle">40</T>
      <T x={1540} y={329} w={17} size={21} anchor="middle">90</T>
      <T x={1365} y={323} w={110} size={22}>−300x180x12t</T>
      <T x={1374} y={352} w={36} size={17} cjk>冲孔ø</T>
      <T x={1410} y={355} w={27} size={26}>22</T>
      <T x={1543} y={431} w={8} size={38}>1</T>
      <path d="M1558 419h8" stroke="#ddd" strokeWidth="1.200" />
      <path d="M1503 444.500H1565" stroke="#fff" strokeWidth="5" />
      {[215, 235, 254.300, 274].map((y) => <T key={y} x={1457} y={y} w={16} size={20} anchor="middle" rot={-90}>45</T>)}

      {/* view cube */}
      <circle cx="1483.500" cy="207" r="51" fill="none" stroke="#6a6a6a" strokeOpacity="0.400" strokeWidth="11" />
      <rect x="1459.300" y="184.300" width="50" height="49" fill="#b4b4b4" fillOpacity="0.850" />
      <rect x="1469" y="194" width="31" height="29" fill="#808080" fillOpacity="0.800" />
      <g style={CAD_CJK}>
        <text x="1484" y="217" fontSize="22" textAnchor="middle" fill="#d2d2d2">上</text>
        <text x="1484" y="164" fontSize="18" textAnchor="middle" fill="#999">北</text>
        <text x="1429" y="217" fontSize="18" textAnchor="middle" fill="#999">西</text>
        <text x="1538" y="218" fontSize="18" textAnchor="middle" fill="#999">东</text>
        <text x="1484" y="272" fontSize="18" textAnchor="middle" fill="#999">南</text>
      </g>
      <rect x="1462" y="294.500" width="45" height="15.500" rx="3" fill="#72727f" fillOpacity="0.900" />
      <text x="1466" y="306" fontSize="10.500" fill="#c4c4cc" fontFamily="Liberation Sans">WCS</text>

      {/* watermarks */}
      {wmRows.map(([x, y]) => (
        <text key={x + '-' + y} x={x} y={y} transform={`rotate(-45 ${x} ${y})`} fontSize="40" fontWeight="700" fill="#fff" fillOpacity="0.150" textLength={400} lengthAdjust="spacingAndGlyphs" style={{ fontFamily: '"Noto Sans CJK SC", sans-serif' }}>
          知末网www.znzmo.com
        </text>
      ))}
    </svg>
  );
}

function CommandLine() {
  const rows = [
    ['当前设置: 编辑模式 = Multiple', 'w-[193px] text-[#b4b4b4]'],
    ['选择注释对象或 [放弃(U)/模式(M)]:', 'w-[218px] text-[#d5d5d5]'],
    ['选择注释对象或 [放弃(U)/模式(M)]: *取消*', 'w-[263px] text-[#ebebeb]'],
  ];
  return (
    <div className="absolute bottom-0 left-[236px] flex w-[1061px] flex-col items-start">
      <div className="ml-[60px] flex flex-col gap-[4px]">
        {rows.map(([t, c]) => (
          <div key={t} className={`flex h-[15px] items-center overflow-hidden rounded-[2px] bg-[#5c5c5c]/90 pl-[2px] font-['Liberation_Mono','Noto_Sans_CJK_SC',monospace] text-[12px] whitespace-nowrap ${c}`}>{t}</div>
        ))}
      </div>
      <div className="mt-[3px] flex h-[25px] w-full">
        <div className="flex w-[54px] items-center rounded-l-[3px] bg-[#232b38] pl-[4px]">
          <div className="h-[18px] w-[4px] border-x border-dotted border-[#d0d0d0]" />
          <X size={11} strokeWidth={2.500} className="ml-[2px] text-[#d0d3d8]" />
          <svg width="15" height="16" viewBox="0 0 20 20" className="ml-[4px]"><path d="M3 18L12 8c-2-3 1-6 5-6l-3 3 2 2 3-2c0 4-3 7-6 5l-7 9z" fill="#d0d3d8" /></svg>
        </div>
        <div className="relative flex flex-1 items-center bg-[#b2b2b2] pl-[4px]">
          <div className="absolute top-[12px] right-0 left-0 h-[2px] bg-[#e4e4a2]" />
          <div className="relative flex h-[14px] w-[15px] items-center border border-[#333] pl-[1px] text-[7px] leading-none text-[#333]">&gt;_</div>
          <div className="relative ml-[3px] border-x-[3.500px] border-t-[4px] border-x-transparent border-t-[#444]" />
          <span className="relative ml-[8px] text-[11.500px] text-[#7e7e7e] italic">键入命令</span>
          <div className="relative mr-[4px] ml-auto border-x-[3.500px] border-b-[4px] border-x-transparent border-b-[#555]" />
        </div>
      </div>
    </div>
  );
}

const SB = ({ n, w = 'w-[24px]', active, s = 17 }) => (
  <div className={`flex h-full shrink-0 items-center justify-center ${w} ${active ? 'bg-[#4c87c2]' : ''}`}>
    <Ic n={n} s={s} />
  </div>
);
const Dd = ({ w = 'w-[17px]' }) => <Caret className={w} />;
const Grp = ({ className = '', children }) => (
  <div className={`flex h-[24px] shrink-0 items-center bg-[#3a4556] ${className}`}>{children}</div>
);

function StatusBar() {
  return (
    <div className="flex h-[31px] shrink-0 items-start bg-[#232b38] font-['Liberation_Sans','Noto_Sans_CJK_SC',sans-serif] text-[12px] text-[#dfe1e5]">
      <div className="flex h-[18px] w-[403px] shrink-0 items-start">
        <div className="ml-[15px] flex h-[18px] w-[47px] items-center justify-center rounded-b-[4px] bg-[#3a4556] text-[#f0f1f3]">模型</div>
        <div className="ml-[3px] flex h-[18px] w-[60px] items-center justify-center rounded-b-[4px] bg-[#2f3947] text-[#b9bec6]">Layout1</div>
        <div className="ml-[3px] flex h-[15px] w-[20px] items-center justify-center rounded-b-[4px] bg-[#2f3947]"><Plus size={10} strokeWidth={3} className="text-[#b9bec6]" /></div>
      </div>
      <div className="mt-[2px] flex gap-[2px]">
        <Grp className="w-[136px] justify-end pr-[5px]">847687, 80886, 0</Grp>
        <Grp className="w-[30px] justify-center">模型</Grp>
        <Grp className="w-[63px] pl-[1px]"><SB n="rowgrid" w="w-[23px]" /><SB n="rowsnap" w="w-[23px]" /><Dd /></Grp>
        <Grp className="w-[327px]">
          <SB n="snapq" /><SB n="dynin" active /><SB n="ortho" /><SB n="polar" /><Dd /><SB n="osnap" /><Dd /><SB n="angle" w="w-[21px]" />
          <SB n="lockv" active w="w-[22px] mx-px" /><Dd /><SB n="lw" /><SB n="trans" active w="w-[22px] mx-px" /><SB n="selcyc" /><SB n="obj3" /><Dd />
        </Grp>
        <Grp className="w-[100px]"><SB n="ucsd" w="w-[23px]" /><SB n="gizmo" w="w-[23px]" /><Dd /><SB n="annoauto" active w="w-[22px]" /><Dd /></Grp>
        <Grp className="w-[141px]">
          <SB n="annoact" active w="w-[22px]" /><SB n="annob" /><SB n="annoc" />
          <span className="ml-[4px] w-[52px] text-[11.500px] whitespace-nowrap">1:1 / 100%</span>
          <Dd />
        </Grp>
        <Grp className="w-[40px]"><SB n="gear" /><Dd w="w-[16px]" /></Grp>
        <Grp className="w-[23px] justify-center"><SB n="plus" w="w-[23px]" /></Grp>
        <Grp className="w-[93px]"><SB n="ruler" w="w-[22px]" /><span className="ml-[7px] w-[48px] text-[11.500px]">小数</span><Dd w="w-[14px]" /></Grp>
        <Grp className="w-[26px] justify-center"><SB n="quickp" w="w-[26px]" /></Grp>
        <Grp className="w-[38px]"><SB n="lockui" /><Dd w="w-[14px]" /></Grp>
        <Grp className="w-[100px] pl-[1px]"><SB n="isolate" w="w-[21px]" /><div className="w-[5px]" /><SB n="hwacc" active w="w-[22px]" /><SB n="clean" w="w-[25px]" /><SB n="warn" w="w-[26px]" /></Grp>
        <Grp className="ml-[3px] w-[52px]"><SB n="full" w="w-[28px]" /><SB n="menu" /></Grp>
      </div>
    </div>
  );
}

export default function App() {
  return (
    <div className="relative flex h-[1333px] w-[1600px] flex-col overflow-hidden bg-[#3b4658] font-['Liberation_Sans','Noto_Sans_CJK_SC',sans-serif]">
      <div className="h-[2px] shrink-0 bg-[#0b8fd6]" />
      <TitleBar />
      <MenuBar />
      <TabStrip />
      <ToolRow1 />
      <ToolRow2 />
      <div className="flex h-[1171px] shrink-0">
        <SideBar tools={leftTools} className="w-[32px] pl-[4px]" />
        <div className="relative w-[1533px] shrink-0">
          <Drawing />
          <CommandLine />
        </div>
        <SideBar tools={rightTools} className="w-[35px] pl-[4px]" />
      </div>
      <StatusBar />
      <div className="h-[2px] shrink-0 bg-[#0b8fd6]" />

      {/* site stamp over the bottom corner */}
      <div className="pointer-events-none absolute top-[1192px] left-[1405px] font-['Noto_Sans_CJK_SC',sans-serif] text-[62px] leading-[80px] font-medium whitespace-nowrap text-[#cfcfcf]/90">知末</div>
      <div className="pointer-events-none absolute top-[1275px] left-[1360px] font-['Liberation_Sans',sans-serif] text-[32.400px] leading-[38px] font-medium whitespace-nowrap text-white/95">ID: 1173687080</div>
    </div>
  );
}
